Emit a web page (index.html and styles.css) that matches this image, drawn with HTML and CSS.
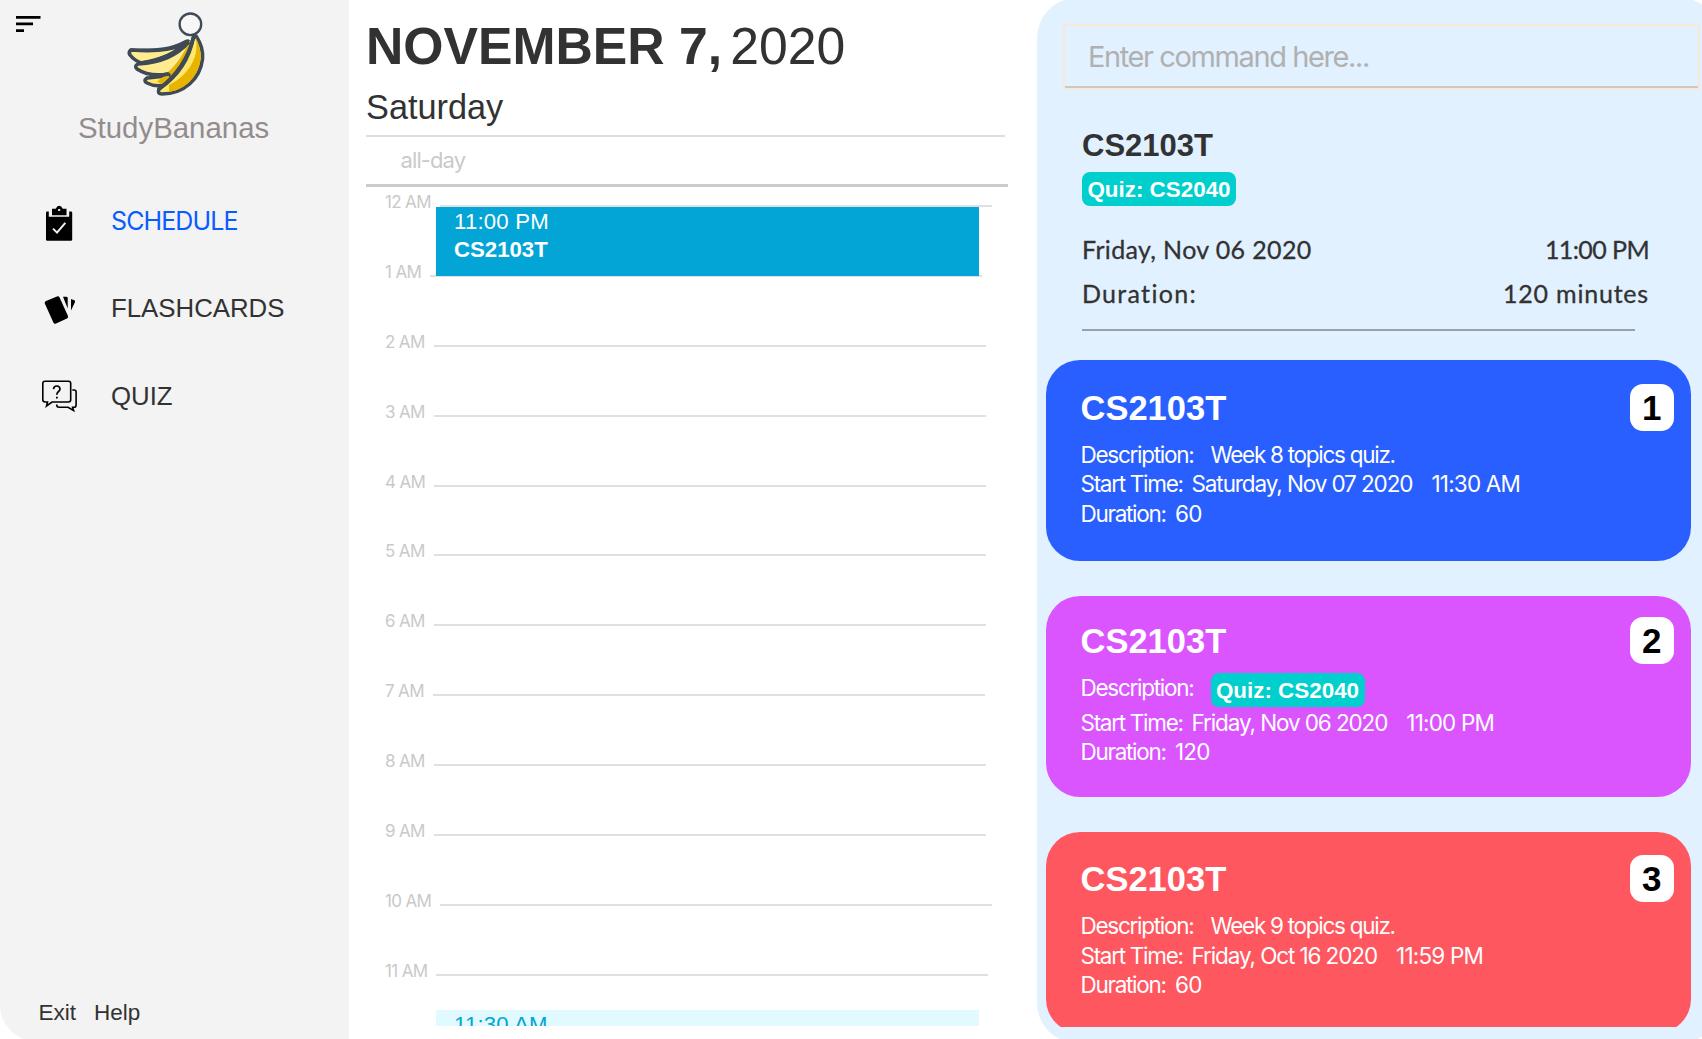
FILE: index.html
```html
<!DOCTYPE html>
<html lang="en">
<head>
<meta charset="utf-8">
<title>StudyBananas</title>
<link rel="stylesheet" href="styles.css">
</head>
<body>
<div class="app">
  <aside class="sidebar">
    <div class="masthead">
      <svg class="menu" viewBox="0 0 25 17" width="25" height="17"><path d="M0 0h24.5v2.8H0zM0 6.4h17v2.8H0zM0 13.2h8v2.8H0z"/></svg>
      <svg class="logo" viewBox="0 0 80 86" width="80" height="86" stroke="#3e4a55" stroke-width="3.6" stroke-linejoin="round" stroke-linecap="round">
        <path fill="#ffec91" d="M62 29C50 37 36 40 5 38Q2 40 4 43Q8 48 15 51C32 49 48 43 62 29Z"/>
        <path fill="#ffec91" d="M63 30C50 44 36 50 12 52Q8 54 11 57C20 63 30 64 42 62L36 72L50 66L67 30Z"/>
        <path fill="#e8b400" stroke="none" d="M63 29C57 44 50 53 42 60L40 69L52 60Q66 44 68 26Z"/>
        <path fill="#ffe76b" d="M43 63C36 65 28 65 21 66Q17 69 21 71C27 74 34 74 38 73Z"/>
        <path fill="#e8b400" stroke="none" d="M42 63Q35 65 31 70L38 72L44 66Z"/>
        <path fill="#ffe76b" d="M67.500 25C63 49 51 65 33 77Q31 82 36 82C58 82 74 67 76.500 47C77.500 37 74 30 70 24Z"/>
        <path fill="#e8b400" stroke="none" d="M70 27C73 45 63 63 43 73V80C61 77 72 64 74.700 47Q75 36 70 26Z"/>
        <path fill="none" d="M60 29.500C46 37 34 39 5 38M15 51C36 47 50 42 62 31M67.500 25C62 48 50 64 33 77M26 63Q34 64 42 62"/>
        <circle cx="64.400" cy="12.300" r="10.800" fill="#f7f7f8" stroke-width="2.300"/>
      </svg>
    </div>
    <div class="brand">StudyBananas</div>
    <nav class="nav">
      <a class="nav-item active">
        <svg viewBox="0 0 40 40" width="40" height="40"><path d="M7 10.500h1.800v5.300H29.200v-5.300H31q1.200 0 1.200 1.200V38.500q0 1.200-1.200 1.200H7.200Q6 39.700 6 38.500V11.700q0-1.200 1-1.200z"/><path fill-rule="evenodd" d="M12 7.700h3.700Q17 4.700 19.200 4.700T22.700 7.700H26.500v6.500H12zM18.200 10h2V8h-2z"/><path d="M13 27.600l4 4 8.300-9.800" fill="none" stroke="#f3f3f3" stroke-width="2"/></svg>
        <span>SCHEDULE</span>
      </a>
      <a class="nav-item">
        <svg viewBox="0 0 40 40" width="40" height="40"><path d="M6 12.900l11-4.500q1.800-.6 2.600 1L28 28q.6 1.800-1 2.600l-11 4.900q-1.800.7-2.600-1L4.800 15.600q-.6-1.900 1.200-2.700z"/><path d="M23 8.700h3.400q1.300 0 1.300 1.300v10.500zM31 11l3.300 1.300q1.200.6.600 2L31 22.500z"/></svg>
        <span>FLASHCARDS</span>
      </a>
      <a class="nav-item">
        <svg viewBox="0 0 40 40" width="40" height="40" fill="none" stroke="#000" stroke-width="1.600"><path d="M5 5.300h23.500q2.200 0 2.200 2.200V23.800q0 2.200-2.200 2.200H12l-5.500 4L7.500 26H5.200q-2.400 0-2.400-2.200V7.500Q2.800 5.300 5 5.300z"/><path d="M32.300 14h1.800q2 0 2 2V29q0 2.300-2 2.300h-1.500l1 3.200-5.600-3.200H19q-2.300 0-2.300-2.800"/><path d="M13.500 13.200q.3-3.200 3.300-3.200t3.200 3q0 1.500-1.700 2.800-1.500 1.200-1.500 3" stroke-width="1.700"/><path d="M16 21.700h1.800" stroke-width="1.800"/></svg>
        <span>QUIZ</span>
      </a>
    </nav>
    <footer class="side-foot"><span>Exit</span><span>Help</span></footer>
  </aside>

  <main class="day">
    <h1 class="date"><b>NOVEMBER 7,</b><span>2020</span></h1>
    <h2 class="weekday">Saturday</h2>
    <div class="all-day">all-day</div>
    <div class="timeline">
      <div class="hour"><span>12 AM</span><i></i></div>
      <div class="hour"><span>1 AM</span><i></i></div>
      <div class="hour"><span>2 AM</span><i></i></div>
      <div class="hour"><span>3 AM</span><i></i></div>
      <div class="hour"><span>4 AM</span><i></i></div>
      <div class="hour"><span>5 AM</span><i></i></div>
      <div class="hour"><span>6 AM</span><i></i></div>
      <div class="hour"><span>7 AM</span><i></i></div>
      <div class="hour"><span>8 AM</span><i></i></div>
      <div class="hour"><span>9 AM</span><i></i></div>
      <div class="hour"><span>10 AM</span><i></i></div>
      <div class="hour"><span>11 AM</span><i></i></div>
      <div class="event event-first"><span>11:00 PM</span><b>CS2103T</b></div>
      <div class="event event-second"><span>11:30 AM</span></div>
    </div>
  </main>

  <section class="panel">
    <div class="command">Enter command here...</div>
    <div class="detail">
      <h3 class="detail-title">CS2103T</h3>
      <span class="tag">Quiz: CS2040</span>
      <div class="detail-row first"><span class="d-date">Friday, Nov 06 2020</span><span class="d-time">11:00 PM</span></div>
      <div class="detail-row"><span class="d-label">Duration:</span><span class="d-length">120 minutes</span></div>
    </div>
    <div class="cards">
      <article class="card blue">
        <div class="card-body">
          <h3>CS2103T</h3>
          <p><span class="desc">Description:</span><span>Week 8 topics quiz.</span></p>
          <p><span class="start">Start Time:</span><span class="when">Saturday, Nov 07 2020</span><span class="time">11:30 AM</span></p>
          <p><span class="dur">Duration:</span><span class="time">60</span></p>
        </div>
        <div class="badge">1</div>
      </article>
      <article class="card purple">
        <div class="card-body">
          <h3>CS2103T</h3>
          <p class="tagged"><span class="desc">Description:</span><span class="tag">Quiz: CS2040</span></p>
          <p><span class="start">Start Time:</span><span class="when">Friday, Nov 06 2020</span><span class="time">11:00 PM</span></p>
          <p><span class="dur">Duration:</span><span class="time">120</span></p>
        </div>
        <div class="badge">2</div>
      </article>
      <article class="card red">
        <div class="card-body">
          <h3>CS2103T</h3>
          <p><span class="desc">Description:</span><span>Week 9 topics quiz.</span></p>
          <p><span class="start">Start Time:</span><span class="when">Friday, Oct 16 2020</span><span class="time">11:59 PM</span></p>
          <p><span class="dur">Duration:</span><span class="time">60</span></p>
        </div>
        <div class="badge">3</div>
      </article>
    </div>
  </section>
</div>
</body>
</html>
```
FILE: styles.css
```css
* { box-sizing: border-box; }
body {
  margin: 0;
  background: #fff;
  color: #323232;
  font-family: "Liberation Sans", sans-serif;
}
h1, h2, h3, p { margin: 0; font-weight: 400; }
.app { display: flex; width: 1702px; height: 1039px; overflow: hidden; }

.sidebar {
  flex: none;
  display: flex;
  flex-direction: column;
  width: 348.5px;
  height: 1041px;
  background: #f3f3f3;
  border-bottom-left-radius: 36px;
}
.masthead { display: flex; align-items: flex-start; padding: 12px 0 0 16px; height: 107px; }
.menu { margin-top: 4px; }
.logo { margin-left: 85px; }
.brand { padding-left: 78px; font-size: 29.4px; line-height: 41px; color: #938c8c; }
.nav { display: flex; flex-direction: column; gap: 47.3px; margin-top: 53px; padding-left: 40px; }
.nav-item { display: flex; gap: 31px; height: 40px; font-size: 25.8px; line-height: 40px; white-space: nowrap; }
.nav-item.active { color: #0a5cff; font-family: Inter, sans-serif; font-size: 25px; line-height: 41px; letter-spacing: -0.9px; }
.side-foot { display: flex; gap: 18px; margin-top: auto; padding: 0 0 13px 38.5px; font-size: 22.5px; line-height: 30px; }

.day { flex: none; width: 688.5px; padding: 19px 0 0 17.5px; }
.date { display: flex; gap: 8px; height: 71px; font-size: 51.7px; line-height: 55px; white-space: nowrap; }
.weekday { width: 638.5px; height: 46.5px; border-bottom: 2px solid #dedede; font-size: 34.3px; line-height: 34px; }
.all-day {
  width: 642px;
  height: 50px;
  padding-left: 34.5px;
  border-bottom: 3px solid #cbcbcb;
  color: #cacaca;
  font-family: Inter, sans-serif;
  font-size: 22px;
  line-height: 47px;
  letter-spacing: -0.9px;
}
.timeline { position: relative; width: 642px; height: 839.5px; padding: 5.5px 0 0 19px; overflow: hidden; }
.hour { display: flex; gap: 9px; height: 69.88px; font-family: Inter, sans-serif; font-size: 17px; line-height: 21px; letter-spacing: -0.65px; color: #c9c9c9; }
.hour i { width: 552px; height: 2px; margin-top: 13px; background: #e0e0e0; }
.event { position: absolute; left: 70px; width: 542.5px; height: 69.5px; padding: 1px 0 0 18px; font-size: 22.2px; line-height: 28px; }
.event span, .event b { display: block; }
.event span { letter-spacing: 0.2px; }
.event-first { top: 20px; background: #02a5d5; color: #fff; }
.event-second { top: 823.5px; background: #e0faff; color: #02a5d5; }

.panel {
  flex: none;
  width: 683px;
  height: 1045px;
  margin-top: -2px;
  padding: 25.5px 0 0 8.5px;
  background: #e1f1ff;
  border-radius: 40px;
}
.command {
  width: 636.5px;
  height: 66px;
  margin-left: 17.5px;
  padding-left: 23px;
  border: 2px solid #f6e9d5;
  box-shadow: inset 0 -2px #c9c9c9;
  color: #b0b0b0;
  font-family: Inter, sans-serif;
  font-size: 29px;
  line-height: 61px;
  letter-spacing: -1.4px;
}
.detail { width: 552.5px; margin-left: 36.5px; padding-top: 36px; height: 241px; border-bottom: 2px solid #9aa1a8; }
.detail-title { height: 46px; font-size: 31px; line-height: 40px; font-weight: 700; }
.tag {
  display: block;
  width: 154px;
  height: 34.5px;
  border-radius: 8px;
  background: #00cfcd;
  color: #fff;
  font-family: "Liberation Sans", sans-serif;
  font-size: 22.4px;
  font-weight: 700;
  line-height: 36px;
  letter-spacing: 0;
  text-align: center;
}
.detail-row { display: flex; justify-content: space-between; width: 567px; height: 44px; font-family: Lato, sans-serif; font-size: 25px; line-height: 44px; -webkit-text-stroke: 0.3px #323232; }
.detail-row.first { margin-top: 21px; }
.d-date { letter-spacing: 0.35px; }
.d-time { letter-spacing: -0.6px; }
.d-label { letter-spacing: 1.3px; }
.d-length { letter-spacing: 0.8px; }

.cards { display: flex; flex-direction: column; gap: 35px; height: 667.5px; margin-top: 29px; overflow: hidden; }
.card { flex: none; display: flex; justify-content: space-between; width: 645.5px; height: 201px; padding: 24px 17.5px 0 35px; border-radius: 34px; color: #fff; }
.blue { background: #2a5fff; }
.purple { background: #db55ff; padding-top: 21px; }
.red { background: #ff575f; padding-top: 23.5px; }
.card h3 { height: 56px; font-size: 34.5px; line-height: 48px; font-weight: 700; }
.card p { display: flex; height: 29.5px; font-family: Inter, sans-serif; font-size: 22.5px; line-height: 29.5px; letter-spacing: -1.28px; white-space: nowrap; }
.card .tagged { height: 35px; }
.desc { width: 130px; }
.start { width: 111px; }
.dur { width: 94.5px; }
.card .when { margin-right: 19px; letter-spacing: -1.1px; }
.card .time { letter-spacing: -0.8px; }
.badge { width: 43.5px; height: 47px; border-radius: 13px; background: #fff; color: #000; font-size: 35px; font-weight: 700; line-height: 48px; text-align: center; }
```
